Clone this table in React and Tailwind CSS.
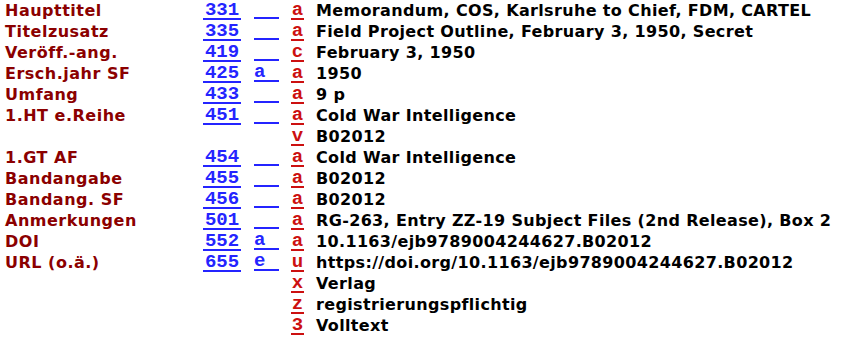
import React from "react";

const rows = [
  ["Haupttitel", "331", "", "a", "Memorandum, COS, Karlsruhe to Chief, FDM, CARTEL"],
  ["Titelzusatz", "335", "", "a", "Field Project Outline, February 3, 1950, Secret"],
  ["Veröff.-ang.", "419", "", "c", "February 3, 1950"],
  ["Ersch.jahr SF", "425", "a", "a", "1950"],
  ["Umfang", "433", "", "a", "9 p"],
  ["1.HT e.Reihe", "451", "", "a", "Cold War Intelligence"],
  [null, null, null, "v", "B02012"],
  ["1.GT AF", "454", "", "a", "Cold War Intelligence"],
  ["Bandangabe", "455", "", "a", "B02012"],
  ["Bandang. SF", "456", "", "a", "B02012"],
  ["Anmerkungen", "501", "", "a", "RG-263, Entry ZZ-19 Subject Files (2nd Release), Box 2"],
  ["DOI", "552", "a", "a", "10.1163/ejb9789004244627.B02012"],
  ["URL (o.ä.)", "655", "e", "u", "https://doi.org/10.1163/ejb9789004244627.B02012"],
  [null, null, null, "x", "Verlag"],
  [null, null, null, "z", "registrierungspflichtig"],
  [null, null, null, "3", "Volltext"],
];

const sans = "font-['DejaVu_Sans',Verdana,sans-serif] font-bold";
const mono = "font-['Liberation_Mono',monospace] font-bold";

export default function App() {
  return (
    <div className="w-[852px] h-[342px] overflow-hidden bg-white">
      {rows.map((r, i) => (
        <div key={i} className="flex h-[21px] items-start whitespace-nowrap">
          <div className={`w-[203px] shrink-0 pl-[5px] text-[16px] leading-[21px] tracking-[0.5px] text-[#8b0000] ${sans}`}>
            {r[0] ?? ""}
          </div>
          <div className="w-[51px] shrink-0">
            {r[1] && (
              <span className={`block w-[38px] h-[20px] border-b-2 border-[#2424ff] text-center text-[19px] leading-[20px] text-[#2424ff] ${mono}`}>
                {r[1]}
              </span>
            )}
          </div>
          <div className="w-[37px] shrink-0">
            {r[1] && (
              <span className={`block w-[25px] h-[19px] border-b-2 border-[#2424ff] text-[19px] leading-[19px] text-[#2424ff] ${mono}`}>
                {r[2]}
              </span>
            )}
          </div>
          <div className="w-[25px] shrink-0">
            <span className={`block w-[13px] h-[20px] border-b-2 border-[#cc1010] text-center text-[19px] leading-[20px] text-[#cc1010] ${mono}`}>
              {r[3]}
            </span>
          </div>
          <div className={`text-[16px] leading-[21px] tracking-[0.35px] text-black ${sans}`}>{r[4]}</div>
        </div>
      ))}
    </div>
  );
}
